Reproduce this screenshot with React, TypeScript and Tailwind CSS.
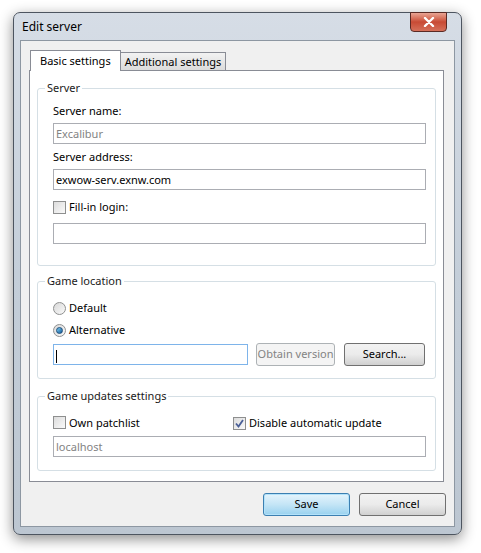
import React from 'react';

function Group({ title, className, children }: { title: string; className: string; children: React.ReactNode }) {
  return (
    <div className={`relative mx-[7px] border border-[#d5dfe5] rounded-[3px] ${className}`}>
      <span className="absolute left-[7px] -top-[9px] bg-white px-[2px] leading-[16px] text-[#1a1a1a]">{title}</span>
      {children}
    </div>
  );
}

function Input({ value, gray, className = '', focus }: { value?: string; gray?: boolean; className?: string; focus?: boolean }) {
  return (
    <div className={`h-[21px] border ${focus ? 'border-[#7eb4ea]' : 'border-[#abadb3]'} bg-white px-[2px] leading-[19px] ${gray ? 'text-[#838383]' : 'text-black'} ${className}`}>
      {focus ? <span className="inline-block w-px h-[13px] bg-black align-middle" /> : value}
    </div>
  );
}

function Check({ checked }: { checked?: boolean }) {
  return (
    <span className="w-[13px] h-[13px] border border-[#8e8f8f] bg-gradient-to-br from-[#dcdcdc] to-[#fafafa] flex items-center justify-center">
      {checked && (
        <svg width="9" height="9" viewBox="0 0 9 9"><path d="M1 4.5 L3.5 7.5 L8 1" stroke="#4a5f97" strokeWidth="1.8" fill="none" /></svg>
      )}
    </span>
  );
}

function Radio({ checked }: { checked?: boolean }) {
  return (
    <span className="w-[13px] h-[13px] rounded-full border border-[#8e8f8f] bg-gradient-to-br from-[#d8d8d8] to-[#fafafa] flex items-center justify-center">
      {checked && <span className="w-[7px] h-[7px] rounded-full bg-gradient-to-br from-[#7dd0f4] to-[#0f5b9a] border border-[#1c4c7a]" />}
    </span>
  );
}

export default function App() {
  return (
    <div className="w-[481px] h-[553px] bg-white pt-[12px] pl-[13px] text-[11px] whitespace-nowrap" style={{ fontFamily: '"Noto Sans", "Liberation Sans", sans-serif' }}>
      <div className="w-[449px] h-[523px] rounded-[7px] border border-[#4d5560] bg-gradient-to-b from-[#d6dde6] via-[#c4ced9] to-[#bcc6d1] shadow-[0_4px_14px_rgba(0,0,0,0.45)] px-[6px] pb-[7px] flex flex-col">
        <div className="h-[27px] flex items-start justify-between">
          <span className="mt-[5px] ml-[2px] text-[12px] text-black">Edit server</span>
          <div className="w-[37px] h-[20px] -mt-px mr-[8px] rounded-b-[4px] border border-[#5a2a24] bg-gradient-to-b from-[#e8a493] via-[#c84a34] to-[#d5705a] flex items-center justify-center">
            <svg width="12" height="10" viewBox="0 0 12 10"><path d="M2 1 L10 9 M10 1 L2 9" stroke="white" strokeWidth="2.4" strokeLinecap="round" /></svg>
          </div>
        </div>
        <div className="flex-1 border border-[#8d97a2] bg-[#f0f0f0] pt-[9px] px-[8px] flex flex-col">
          <div className="flex items-end h-[20px] ml-[1px]">
            <div className="relative z-10 h-[21px] -mb-px px-[9px] border border-b-0 border-[#898c95] bg-white leading-[19px] text-black">Basic settings</div>
            <div className="h-[18px] px-[4px] border border-b-0 border-l-0 border-[#898c95] bg-gradient-to-b from-[#f2f2f2] to-[#dcdcdc] leading-[18px] text-black">Additional settings</div>
          </div>
          <div className="w-[415px] h-[412px] border border-[#898c95] bg-white pt-[17px]">
            <Group title="Server" className="h-[178px] pt-[14px] pl-[15px] pr-[9px]">
              <div className="leading-[16px] text-black">Server name:</div>
              <Input value="Excalibur" gray className="mt-[4px]" />
              <div className="mt-[5px] leading-[16px] text-black">Server address:</div>
              <Input value="exwow-serv.exnw.com" className="mt-[4px]" />
              <div className="mt-[9px] flex items-center gap-[3px] leading-[16px] text-black"><Check />Fill-in login:</div>
              <Input className="mt-[8px]" />
            </Group>
            <Group title="Game location" className="mt-[15px] h-[98px] pt-[18px] pl-[15px] pr-[9px]">
              <div className="flex items-center gap-[3px] leading-[16px]"><Radio />Default</div>
              <div className="mt-[6px] flex items-center gap-[3px] leading-[16px]"><Radio checked />Alternative</div>
              <div className="mt-[5px] flex items-center">
                <Input focus className="w-[195px]" />
                <div className="ml-[8px] w-[79px] h-[23px] border border-[#adb2b5] rounded-[3px] bg-[#f4f4f4] text-[#838383] flex items-center justify-center">Obtain version</div>
                <div className="ml-[9px] w-[81px] h-[23px] border border-[#707070] rounded-[3px] bg-gradient-to-b from-[#f2f2f2] via-[#ebebeb] to-[#d0d0d0] flex items-center justify-center text-black">Search...</div>
              </div>
            </Group>
            <Group title="Game updates settings" className="mt-[17px] h-[75px] pt-[17px] pl-[15px] pr-[9px]">
              <div className="flex items-center">
                <div className="w-[180px] flex items-center gap-[3px] leading-[16px]"><Check />Own patchlist</div>
                <div className="flex items-center gap-[3px] leading-[16px] mt-[1px]"><Check checked />Disable automatic update</div>
              </div>
              <Input value="localhost" gray className="mt-[5px]" />
            </Group>
          </div>
          <div className="mt-[11px] flex justify-end gap-[9px]">
            <div className="w-[87px] h-[23px] border border-[#3c7fb1] rounded-[3px] bg-gradient-to-b from-[#e5f4fc] via-[#c4e5f6] to-[#98d1ef] shadow-[inset_0_0_0_1px_#b3e2fa] flex items-center justify-center text-black">Save</div>
            <div className="w-[87px] h-[23px] border border-[#707070] rounded-[3px] bg-gradient-to-b from-[#f2f2f2] via-[#ebebeb] to-[#d0d0d0] flex items-center justify-center text-black">Cancel</div>
          </div>
        </div>
      </div>
    </div>
  );
}
